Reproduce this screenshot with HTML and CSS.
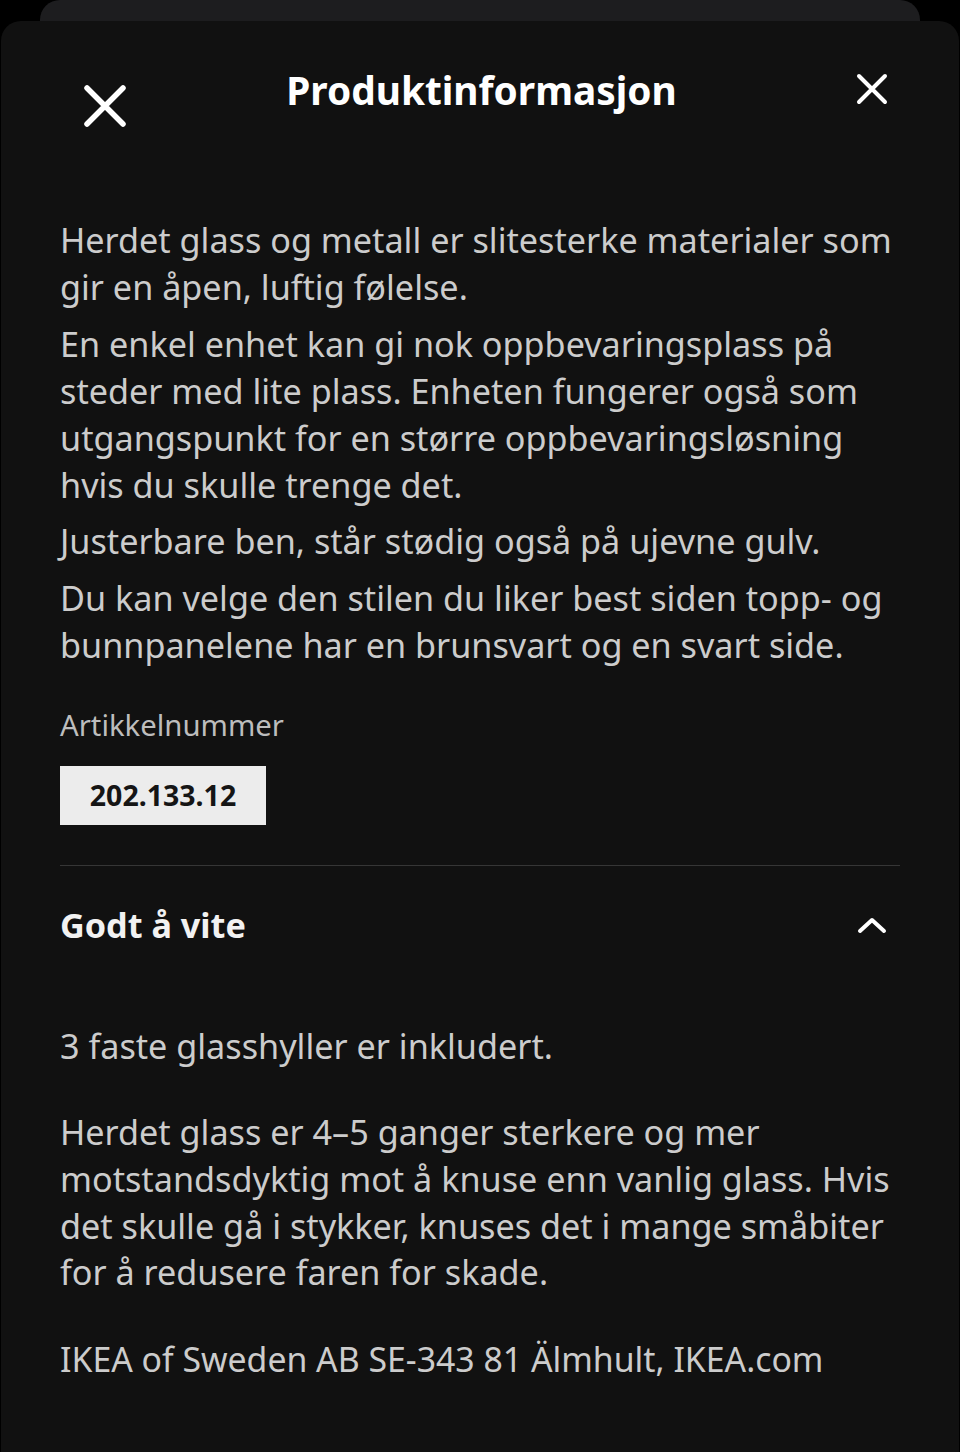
FILE: index.html
```html
<!DOCTYPE html>
<html lang="no">
<head>
<meta charset="utf-8">
<title>Produktinformasjon</title>
<link rel="stylesheet" href="styles.css">
</head>
<body>
<div class="backcard"></div>
<div class="sheet">
  <header class="sheet-header">
    <button class="icon-btn close-left" aria-label="Lukk">
      <svg viewBox="0 0 44 44" width="44" height="44"><path d="M4 4 L40 40 M40 4 L4 40" stroke="#fff" stroke-width="5.5" stroke-linecap="round" fill="none"/></svg>
    </button>
    <h1 class="title">Produktinformasjon</h1>
    <button class="icon-btn close-right" aria-label="Lukk">
      <svg viewBox="0 0 32 32" width="32" height="32"><path d="M3 3 L29 29 M29 3 L3 29" stroke="#fff" stroke-width="4" stroke-linecap="round" fill="none"/></svg>
    </button>
  </header>

  <section class="content">
    <p>Herdet glass og metall er slitesterke materialer som gir en åpen, luftig følelse.</p>
    <p>En enkel enhet kan gi nok oppbevaringsplass på steder med lite plass. Enheten fungerer også som utgangspunkt for en større oppbevaringsløsning hvis du skulle trenge det.</p>
    <p>Justerbare ben, står stødig også på ujevne gulv.</p>
    <p>Du kan velge den stilen du liker best siden topp- og bunnpanelene har en brunsvart og en svart side.</p>

    <div class="article-label">Artikkelnummer</div>
    <div class="article-number">202.133.12</div>
  </section>

  <div class="divider"></div>

  <section class="accordion">
    <div class="accordion-head">
      <h2>Godt å vite</h2>
      <svg class="chevron" viewBox="0 0 30 18" width="30" height="18"><path d="M3 15 L15 4 L27 15" stroke="#fff" stroke-width="4" stroke-linecap="round" stroke-linejoin="round" fill="none"/></svg>
    </div>
    <div class="accordion-body">
      <p>3 faste glasshyller er inkludert.</p>
      <p>Herdet glass er 4–5 ganger sterkere og mer motstandsdyktig mot å knuse enn vanlig glass. Hvis det skulle gå i stykker, knuses det i mange småbiter for å redusere faren for skade.</p>
      <p>IKEA of Sweden AB SE-343 81 Älmhult, IKEA.com</p>
    </div>
  </section>
</div>
</body>
</html>
```

FILE: styles.css
```css
* { box-sizing: border-box; }
html, body {
  margin: 0;
  padding: 0;
  background: #000;
  height: 100%;
}
body {
  font-family: "Noto Sans", "Open Sans", sans-serif;
  color: #cccccc;
  overflow: hidden;
}
.backcard {
  margin: 0 40px;
  height: 40px;
  background: #1d1d1f;
  border-radius: 20px 20px 0 0;
}
.sheet {
  margin-top: -19px;
  margin-left: 1px;
  margin-right: 1px;
  background: #111111;
  border-radius: 20px 20px 0 0;
  min-height: 1440px;
  padding: 0 59px;
}
.sheet-header {
  display: flex;
  align-items: flex-start;
  justify-content: space-between;
  height: 195px;
}
.icon-btn {
  background: none;
  border: 0;
  padding: 0;
  display: block;
}
.close-left { margin-top: 63px; margin-left: 23px; }
.close-right { margin-top: 52px; margin-right: 12px; }
.title {
  margin: 45px 0 0 -20px;
  font-size: 38.8px;
  font-weight: 700;
  color: #fff;
  line-height: 48px;
}
.content p {
  margin: 0 0 9.5px 0;
  font-size: 34.2px;
  line-height: 47px;
}
.content p:last-of-type { margin-bottom: 0; }
.article-label {
  margin-top: 39px;
  font-size: 29.3px;
  line-height: 36px;
  color: #bdbdbd;
}
.article-number {
  display: inline-block;
  margin-top: 23px;
  width: 206px;
  height: 59px;
  background: #ececec;
  color: #151515;
  font-weight: 700;
  font-size: 28.5px;
  line-height: 59px;
  text-align: center;
}
.divider {
  margin-top: 40px;
  height: 1px;
  background: #363636;
}
.accordion-head {
  display: flex;
  align-items: center;
  justify-content: space-between;
  height: 118px;
}
.accordion-head h2 {
  margin: 0;
  font-size: 34.2px;
  font-weight: 700;
  color: #f2f2f2;
}
.chevron { margin-right: 13px; }
.accordion-body { padding-top: 39px; }
.accordion-body p {
  margin: 0 0 40px 0;
  font-size: 34.2px;
  line-height: 46.7px;
}
.accordion-body p:last-child { font-size: 33.8px; }
```
